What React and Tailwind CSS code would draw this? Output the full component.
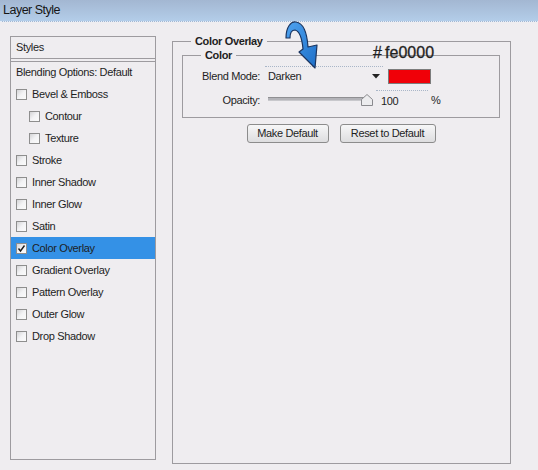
import React from 'react';

const items = [
  { name: 'Bevel & Emboss' },
  { name: 'Contour', indent: true },
  { name: 'Texture', indent: true },
  { name: 'Stroke' },
  { name: 'Inner Shadow' },
  { name: 'Inner Glow' },
  { name: 'Satin' },
  { name: 'Color Overlay', checked: true, active: true },
  { name: 'Gradient Overlay' },
  { name: 'Pattern Overlay' },
  { name: 'Outer Glow' },
  { name: 'Drop Shadow' },
];

const Check = ({ checked }) => (
  <span className="w-[11px] h-[11px] shrink-0 border border-[#8e8e8e] bg-gradient-to-br from-[#d4d4d6] via-[#f3f3f5] to-[#fbfbfb] flex items-center justify-center">
    {checked && (
      <svg width="9" height="9" viewBox="0 0 9 9">
        <path d="M1.5 4.5 L3.5 7 L7.5 1.5" fill="none" stroke="#1c1c1c" strokeWidth="1.4" />
      </svg>
    )}
  </span>
);

const Arrow = () => (
  <svg className="absolute left-[280px] top-[18px]" width="45" height="55" viewBox="0 0 45 55">
    <defs>
      <linearGradient id="ag" x1="0" y1="0" x2="1" y2="1">
        <stop offset="0" stopColor="#4fa3f0" />
        <stop offset="1" stopColor="#1d6fc8" />
      </linearGradient>
    </defs>
    <path
      d="M6 20 C6 9 11 3 16 4 C23 5 27 14 28 29 L37 27 L35 50 L19 34 L23 31 C22 20 19 13 15 12 C12 12 10 15 10 20 Z"
      fill="url(#ag)"
      stroke="#1b3560"
      strokeWidth="1.2"
      strokeLinejoin="round"
    />
  </svg>
);

export default function App() {
  return (
    <div className="relative w-[538px] h-[470px] overflow-hidden bg-[#efedf0] font-['Liberation_Sans',Arial,sans-serif] text-[11px] tracking-[-0.35px] text-[#1e1e1e]">
      <div className="h-[22px] pl-[3px] flex items-center bg-gradient-to-b from-[#a3b7d2] to-[#b3cde9] border-b border-dotted border-[#e6eef8] text-[12.5px] tracking-[-0.5px] text-[#161616]">
        Layer Style
      </div>

      <div className="flex items-start pt-[13px] pl-[10px]">
        <div className="w-[146px] h-[424px] mt-[1px] border border-[#9d9b9f]">
          <div className="h-[22px] pl-[5px] flex items-center border-b border-[#9d9b9f]">Styles</div>
          <div className="h-[22px] mt-[2px] pl-[5px] flex items-center border-t border-[#9d9b9f]">Blending Options: Default</div>
          {items.map((it) => (
            <div
              key={it.name}
              className={`h-[22px] flex items-center gap-[5px] ${it.indent ? 'pl-[18px]' : 'pl-[5px]'} ${it.active ? 'bg-[#3491e6]' : ''}`}
            >
              <Check checked={it.checked} />
              <span>{it.name}</span>
            </div>
          ))}
        </div>

        <fieldset className="ml-[16px] w-[339px] h-[429px] border border-[#9d9b9f] pl-[9px] pr-[10px]">
          <legend className="ml-[9px] px-[4px] font-bold leading-[13px]">Color Overlay</legend>

          <fieldset className="mt-[1px] border border-[#9d9b9f] pb-[7px]">
            <legend className="ml-[18px] px-[4px] font-bold leading-[13px]">Color</legend>
            <div className="mt-[4px] h-[20px] flex items-center">
              <span className="w-[77px] text-right">Blend Mode:</span>
              <div className="ml-[5px] w-[118px] h-[20px] border-t border-dotted border-[#a9b6c8] flex items-center justify-between pl-[3px] pr-[3px]">
                <span>Darken</span>
                <svg width="8" height="5" viewBox="0 0 8 5">
                  <path d="M0 0 L8 0 L4 4.5 Z" fill="#222" />
                </svg>
              </div>
              <div className="ml-[5px] w-[43px] h-[15px] border border-[#7c7c7c] bg-[#f00008]" />
            </div>
            <div className="mt-[4px] h-[20px] flex items-center">
              <span className="w-[77px] text-right">Opacity:</span>
              <div className="relative ml-[8px] w-[104px] h-[20px]">
                <div className="absolute left-0 top-[7px] w-[99px] h-[4px] border-t border-[#8f8f92] border-b border-b-[#c8c8cc] bg-[#b3b3b8]" />
                <svg className="absolute left-[93px] top-[4px]" width="12" height="12" viewBox="0 0 12 12">
                  <path d="M6 0.5 L11.5 5.5 L11.5 11.5 L0.5 11.5 L0.5 5.5 Z" fill="#ececee" stroke="#8a8a8e" />
                </svg>
              </div>
              <div className="ml-[4px] w-[52px] h-[20px] border-t border-dotted border-[#a9b6c8] flex items-center pl-[5px] pt-[1px]">100</div>
              <span className="ml-[3px] pt-[1px]">%</span>
            </div>
          </fieldset>

          <div className="mt-[6px] flex justify-center gap-[11px]">
            <button className="w-[82px] h-[19px] rounded-[3px] border border-[#8c8c8c] bg-gradient-to-b from-[#f7f7f8] to-[#dddddf] text-[11px] tracking-[-0.35px]">
              Make Default
            </button>
            <button className="w-[96px] h-[19px] rounded-[3px] border border-[#8c8c8c] bg-gradient-to-b from-[#f7f7f8] to-[#dddddf] text-[11px] tracking-[-0.35px]">
              Reset to Default
            </button>
          </div>
        </fieldset>
      </div>

      <div className="absolute left-[373px] top-[43px] text-[16px] leading-[20px] text-[#1f1f1f] tracking-[0px] [-webkit-text-stroke:0.3px_#1f1f1f]">
        #&thinsp;fe0000
      </div>
      <Arrow />
    </div>
  );
}
